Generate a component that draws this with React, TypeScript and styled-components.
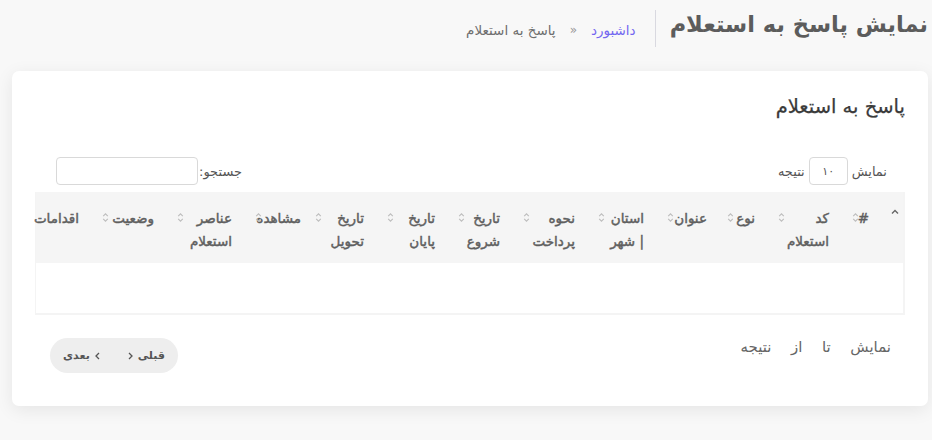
import React from 'react';
import styled, { createGlobalStyle } from 'styled-components';

const GlobalStyle = createGlobalStyle`
  html, body {
    margin: 0;
    padding: 0;
    background: #f8f8f8;
  }
  body {
    direction: rtl;
    font-family: "DejaVu Sans", "Noto Sans", sans-serif;
    color: #555;
    width: 932px;
    overflow: hidden;
  }
  * {
    box-sizing: border-box;
  }
`;

const Page = styled.div`
  display: flex;
  flex-direction: column;
  padding: 0 4px 33px 7px;
`;

const PageHeader = styled.div`
  display: flex;
  align-items: center;
  height: 56px;
`;

const PageTitle = styled.h1`
  margin: 0 0 8px 0;
  font-size: 22.5px;
  font-weight: bold;
  color: #5c5c5c;
  white-space: nowrap;
`;

const Divider = styled.div`
  width: 1px;
  height: 37px;
  background: #d9d9e0;
  margin: 0 14px;
`;

const Breadcrumb = styled.div`
  display: flex;
  align-items: center;
  gap: 14px;
  font-size: 13.5px;
  color: #6e6e6e;
  margin: 4px 5px 0 0;
`;

const Crumb = styled.span<{ $link?: boolean }>`
  color: ${(p) => (p.$link ? '#7367f0' : '#6e6e6e')};
`;

const Sep = styled.span`
  color: #999;
  font-size: 12px;
`;

const Card = styled.div`
  margin: 15px 0 0 5px;
  background: #fff;
  border-radius: 7px;
  box-shadow: 0 4px 18px rgba(0, 0, 0, 0.08);
  padding: 20px 23px 33px;
`;

const CardTitle = styled.h2`
  margin: 0;
  font-size: 19.5px;
  line-height: 32px;
  font-weight: normal;
  -webkit-text-stroke: 0.25px #3a3a3a;
  color: #3a3a3a;
`;

const Controls = styled.div`
  display: flex;
  justify-content: space-between;
  align-items: center;
  margin-top: 34px;
  padding: 0 18px 0 21px;
  font-size: 13px;
  color: #555;
`;

const LengthControl = styled.label`
  display: flex;
  align-items: center;
  gap: 4px;
`;

const SmallInput = styled.div`
  width: 39px;
  height: 28px;
  border: 1px solid #d9d9d9;
  border-radius: 4px;
  display: flex;
  align-items: center;
  justify-content: center;
  font-size: 11px;
  color: #555;
`;

const SearchControl = styled.label`
  display: flex;
  align-items: center;
  gap: 1px;
`;

const SearchInput = styled.input`
  width: 142px;
  height: 28px;
  border: 1px solid #d9d9d9;
  border-radius: 4px;
  outline: none;
  background: #fff;
`;

const TableWrap = styled.div`
  margin-top: 7px;
  border: 2px solid #f4f4f4;
  border-top: none;
`;

const Table = styled.table`
  width: 100%;
  table-layout: fixed;
  border-collapse: collapse;
`;

const Th = styled.th<{ $padRight: number }>`
  position: relative;
  background: #f5f5f5;
  text-align: right;
  vertical-align: top;
  padding: 15px ${(p) => p.$padRight}px 10px 4px;
  font-size: 13.5px;
  line-height: 23px;
  font-weight: normal;
  -webkit-text-stroke: 0.45px #5f5f5f;
  color: #5f5f5f;
  white-space: nowrap;
`;

const SortIcon = styled.svg`
  position: absolute;
  left: 2px;
  top: 20px;
`;

const EmptyCell = styled.td`
  height: 50px;
  background: #fff;
`;

const Footer = styled.div`
  display: flex;
  justify-content: space-between;
  align-items: flex-start;
  margin-top: 23px;
  padding: 0 14px 0 15px;
`;

const Info = styled.div`
  font-size: 15px;
  line-height: 18px;
  word-spacing: 5px;
  color: #666;
  white-space: pre;
`;

const Pager = styled.div`
  display: flex;
  align-items: center;
  justify-content: space-between;
  width: 128px;
  height: 35px;
  padding: 0 13px;
  background: #eeeeee;
  border-radius: 18px;
`;

const PageButton = styled.span`
  display: flex;
  align-items: center;
  gap: 5px;
  font-size: 11px;
  font-weight: bold;
  color: #555;
`;

type Column = { label: React.ReactNode; width: number; pad?: number; sort?: 'asc' | 'off' };

const columns: Column[] = [
  { label: '', width: 13, pad: 0, sort: 'asc' },
  { label: '#', width: 40 },
  { label: <>کد<br />استعلام</>, width: 74 },
  { label: 'نوع', width: 51 },
  { label: 'عنوان', width: 60, pad: 18 },
  { label: <>استان<br />| شهر</>, width: 69 },
  { label: <>نحوه<br />پرداخت</>, width: 75 },
  { label: <>تاریخ<br />شروع</>, width: 65 },
  { label: <>تاریخ<br />پایان</>, width: 71 },
  { label: <>تاریخ<br />تحویل</>, width: 72 },
  { label: 'مشاهده', width: 60, pad: 12 },
  { label: <>عناصر<br />استعلام</>, width: 78 },
  { label: 'وضعیت', width: 75 },
  { label: 'اقدامات', width: 64, sort: 'off' },
];

const Sorter: React.FC<{ active?: boolean }> = ({ active }) =>
  active ? (
    <SortIcon width="8" height="10" viewBox="0 0 8 10" style={{ left: 1, top: 16 }}>
      <path d="M1 5.5 L4 2.5 L7 5.5" fill="none" stroke="#666" strokeWidth="1.4" />
    </SortIcon>
  ) : (
    <SortIcon width="7" height="11" viewBox="0 0 7 11">
      <path
        d="M1.2 4.2 L3.5 1.8 L5.8 4.2 M1.2 6.8 L3.5 9.2 L5.8 6.8"
        fill="none"
        stroke="#bdbdbd"
        strokeWidth="1.1"
      />
    </SortIcon>
  );

const Chevron: React.FC<{ dir: 'left' | 'right' }> = ({ dir }) => (
  <svg width="5" height="8" viewBox="0 0 5 8">
    <path
      d={dir === 'left' ? 'M4 1 L1 4 L4 7' : 'M1 1 L4 4 L1 7'}
      fill="none"
      stroke="#555"
      strokeWidth="1.3"
    />
  </svg>
);

const App: React.FC = () => {
  return (
    <>
      <GlobalStyle />
      <Page>
        <PageHeader>
          <PageTitle>نمایش پاسخ به استعلام</PageTitle>
          <Divider />
          <Breadcrumb>
            <Crumb $link>داشبورد</Crumb>
            <Sep>«</Sep>
            <Crumb>پاسخ به استعلام</Crumb>
          </Breadcrumb>
        </PageHeader>

        <Card>
          <CardTitle>پاسخ به استعلام</CardTitle>

          <Controls>
            <LengthControl>
              نمایش
              <SmallInput>۱۰</SmallInput>
              نتیجه
            </LengthControl>
            <SearchControl>
              جستجو:
              <SearchInput type="search" />
            </SearchControl>
          </Controls>

          <TableWrap>
            <Table>
              <colgroup>
                {columns.map((c, i) => (
                  <col key={i} style={{ width: c.width }} />
                ))}
              </colgroup>
              <thead>
                <tr>
                  {columns.map((c, i) => (
                    <Th key={i} $padRight={c.pad ?? 21}>
                      {c.label}
                      {c.sort !== 'off' && <Sorter active={c.sort === 'asc'} />}
                    </Th>
                  ))}
                </tr>
              </thead>
              <tbody>
                <tr>
                  <EmptyCell colSpan={columns.length} />
                </tr>
              </tbody>
            </Table>
          </TableWrap>

          <Footer>
            <Info>نمایش  تا  از  نتیجه</Info>
            <Pager>
              <PageButton>
                قبلی
                <Chevron dir="right" />
              </PageButton>
              <PageButton>
                <Chevron dir="left" />
                بعدی
              </PageButton>
            </Pager>
          </Footer>
        </Card>
      </Page>
    </>
  );
};

export default App;
